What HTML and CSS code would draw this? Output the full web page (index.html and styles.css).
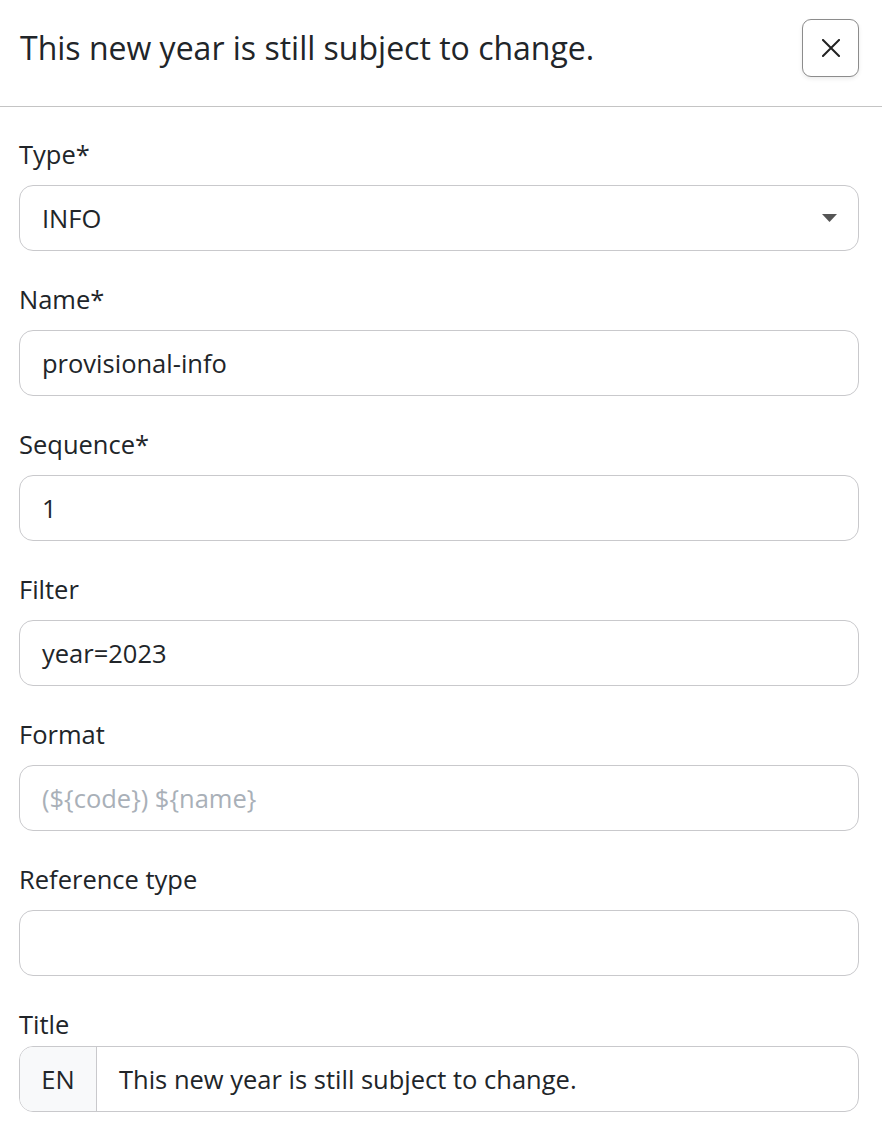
FILE: index.html
```html
<!DOCTYPE html>
<html lang="en">
<head>
<meta charset="utf-8">
<title>Edit</title>
<link rel="stylesheet" href="styles.css">
</head>
<body>
<div class="panel">
  <header class="panel-header">
    <h1 class="panel-title">This new year is still subject to change.</h1>
    <button class="close-btn" type="button" aria-label="Close">
      <svg width="18" height="18" viewBox="0 0 18 18"><path d="M1 1L17 17M17 1L1 17" stroke="#222" stroke-width="2" fill="none" stroke-linecap="square"/></svg>
    </button>
  </header>
  <div class="panel-body">
    <div class="field">
      <label class="field-label">Type*</label>
      <div class="control select">
        <span class="control-text">INFO</span>
        <svg class="caret" width="15" height="8" viewBox="0 0 15 8"><path d="M0 0H15L7.5 8Z" fill="#555"/></svg>
      </div>
    </div>
    <div class="field">
      <label class="field-label">Name*</label>
      <div class="control"><span class="control-text">provisional-info</span></div>
    </div>
    <div class="field">
      <label class="field-label">Sequence*</label>
      <div class="control"><span class="control-text">1</span></div>
    </div>
    <div class="field">
      <label class="field-label">Filter</label>
      <div class="control"><span class="control-text">year=2023</span></div>
    </div>
    <div class="field">
      <label class="field-label">Format</label>
      <div class="control"><span class="control-text placeholder">(${code}) ${name}</span></div>
    </div>
    <div class="field">
      <label class="field-label">Reference type</label>
      <div class="control"><span class="control-text"></span></div>
    </div>
    <div class="field field-tight">
      <label class="field-label">Title</label>
      <div class="control group">
        <span class="addon">EN</span>
        <span class="control-text">This new year is still subject to change.</span>
      </div>
    </div>
  </div>
</div>
</body>
</html>
```

FILE: styles.css
```css
html, body {
  margin: 0;
  padding: 0;
  background: #ffffff;
}
body {
  font-family: "Open Sans", "Liberation Sans", sans-serif;
  color: #212529;
}
.panel {
  display: flex;
  flex-direction: column;
}
.panel-header {
  display: flex;
  align-items: center;
  justify-content: space-between;
  padding: 19px 23px 29px 20px;
  border-bottom: 1px solid #c4c4c4;
}
.panel-title {
  margin: 0;
  font-size: 32px;
  font-weight: 400;
  line-height: 40px;
}
.close-btn {
  width: 57px;
  height: 58px;
  display: flex;
  align-items: center;
  justify-content: center;
  border: 1px solid #8c8c8c;
  border-radius: 9px;
  background: #fff;
  box-shadow: 0 2px 4px rgba(0, 0, 0, 0.08);
  padding: 0;
}
.panel-body {
  display: flex;
  flex-direction: column;
  gap: 31px;
  padding: 30px 23px 0 19px;
}
.field {
  display: flex;
  flex-direction: column;
  gap: 14px;
}
.field-tight {
  gap: 5px;
}
.field-label {
  font-size: 25.5px;
  line-height: 34px;
}
.control {
  height: 66px;
  box-sizing: border-box;
  border: 1px solid #c9c9cc;
  border-radius: 14px;
  display: flex;
  align-items: center;
  padding: 0 21px 0 22px;
  font-size: 25.5px;
  overflow: hidden;
}
.control-text {
  flex: 1;
}
.placeholder {
  color: #a9b0b8;
}
.select .caret {
  flex: none;
}
.group {
  padding: 0;
  align-items: stretch;
}
.group .addon {
  flex: none;
  width: 77px;
  box-sizing: border-box;
  display: flex;
  align-items: center;
  justify-content: center;
  background: #f8f9fa;
  border-right: 1px solid #c9c9cc;
}
.group .control-text {
  display: flex;
  align-items: center;
  padding-left: 22px;
}
```
